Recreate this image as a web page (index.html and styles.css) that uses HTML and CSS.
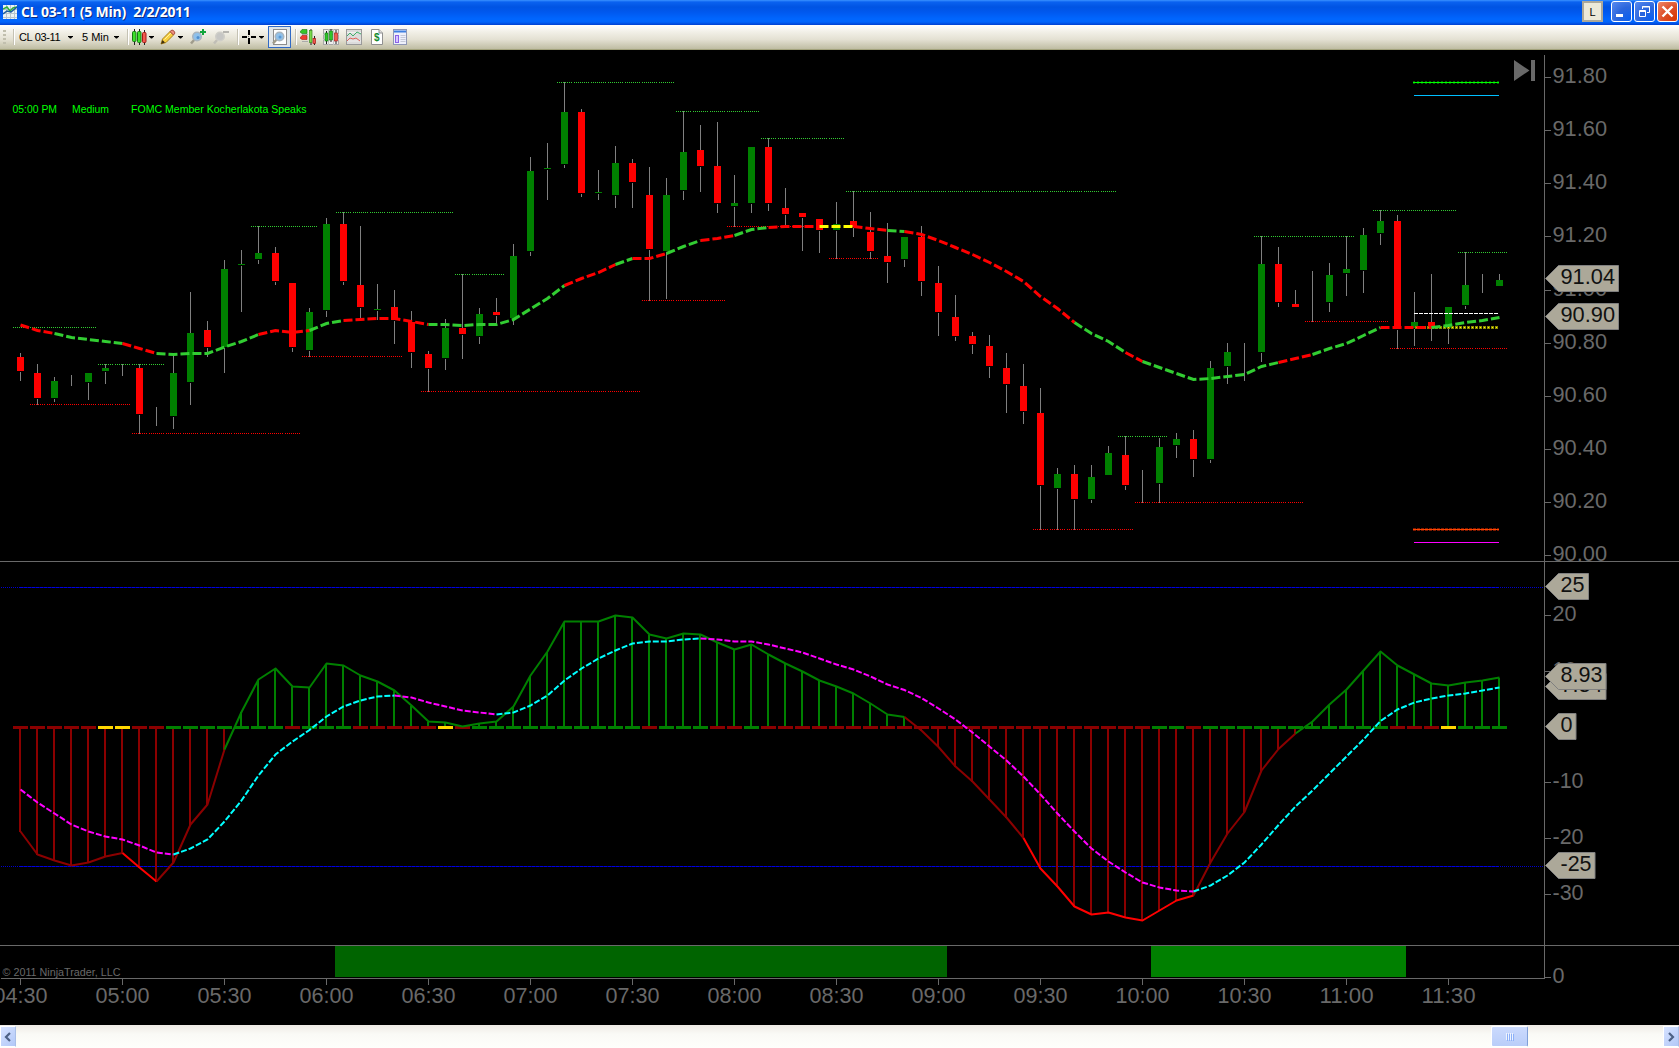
FILE: index.html
```
<!DOCTYPE html>
<html lang="en">
<head>
  <meta charset="UTF-8" />
  <meta name="viewport" content="width=device-width, initial-scale=1" />
  <title>CL 03-11 (5 Min)  2/2/2011</title>
  <link rel="stylesheet" href="styles.css">
</head>
<body>

  <header class="titlebar">
    <svg class="app-icon" width="14" height="14" viewBox="0 0 14 14">
      <rect width="14" height="14" fill="#e9f3f6" />
      <path d="M3.500 0v14M7.500 0v14M11.500 0v14M0 4.500h14M0 8.500h14M0 12.500h14" stroke="#b9c4cc" fill="none" />
      <path d="M0 4l4-2 3 4 3-3 4-1" stroke="#2fae3c" stroke-width="1.500" fill="none" />
      <path d="M0 9l4-3 4 1 6-5" stroke="#1d5e9c" stroke-width="1.500" fill="none" />
    </svg>
    <h1 class="title">CL 03-11 (5 Min)  2/2/2011</h1>
    <button class="link-btn">L</button>
    <div class="window-btns">
      <button class="win" aria-label="Minimize">
        <svg width="21" height="21" viewBox="0 0 21 21"><path d="M5 14.500h7" stroke="#fff" stroke-width="3" /></svg>
      </button>
      <button class="win" aria-label="Restore">
        <svg width="21" height="21" viewBox="0 0 21 21" fill="none" stroke="#fff">
          <path d="M8.500 8V5.500h7v6H13M8 6h8" /><path d="M5.500 9.500h6v6h-6zM5 10.500h7" />
        </svg>
      </button>
      <button class="win close" aria-label="Close">
        <svg width="21" height="21" viewBox="0 0 21 21"><path d="M5.500 5.500l10 10M15.500 5.500l-10 10" stroke="#fff" stroke-width="2.400" /></svg>
      </button>
    </div>
  </header>

  <nav class="toolbar">
    <span class="grip"><i></i><i></i><i></i><i></i></span>
    <span class="sep"></span>
    <span class="pick instrument">CL 03-11</span><i class="caret"></i>
    <span class="pick interval">5 Min</span><i class="caret"></i>
    <span class="sep"></span>

    <div class="tools">
      <svg class="icon" viewBox="0 0 16 16">
        <path d="M2.500 0v16M7.500 0v16M12.500 1v15" stroke="#222" />
        <rect x="0.500" y="2.500" width="3.500" height="10" rx="1" fill="#3ee02b" stroke="#157a12" />
        <rect x="5.500" y="2.500" width="3.500" height="11" rx="1" fill="#3ee02b" stroke="#157a12" />
        <rect x="10.500" y="3.500" width="3.500" height="10" rx="1" fill="#f25b50" stroke="#a31a14" />
      </svg><i class="caret tight"></i>
      <svg class="icon pencil" viewBox="0 0 16 16">
        <path d="M1 15l1.500-5L10 2.500 13.500 6 6 13.500z" fill="#f8d040" stroke="#a8801c" />
        <path d="M10 2.500L12 1q2 0 3 3l-1.500 2z" fill="#ef8f80" stroke="#a85040" />
        <path d="M1 15l1.500-4L5 13.500z" fill="#403010" />
        <path d="M4.500 10.500l6.500-6.500" stroke="#fff0a0" />
      </svg><i class="caret tight"></i>
      <svg class="icon zoom-in" viewBox="0 0 16 16">
        <path d="M4.500 10.500L1 14.500" stroke="#a09c8c" stroke-width="2.500" />
        <circle cx="7" cy="7.500" r="4.300" fill="#8fc0ea" stroke="#a9b4bd" stroke-width="1.500" />
        <circle cx="8" cy="8.500" r="1.500" fill="#4e8fd0" />
        <path d="M13 0v6M10 3h6" stroke="#12a53c" stroke-width="2" />
      </svg>
      <svg class="icon zoom-out" viewBox="0 0 16 16">
        <path d="M4.500 10.500L1 14.500" stroke="#c0beb6" stroke-width="2.500" />
        <circle cx="7" cy="7.500" r="4.300" fill="#c6c6c4" stroke="#cfcec8" stroke-width="1.500" />
        <path d="M10 3h6" stroke="#b6b5b0" stroke-width="2" />
      </svg>
    </div>
    <span class="sep"></span>

    <div class="tools">
      <svg class="icon" viewBox="0 0 16 16" shape-rendering="crispEdges">
        <path d="M7 1v5M7 9v6M0 8h5M9 8h5" stroke="#000" stroke-width="2" /><path d="M6 7h1v1H6z" fill="#777" />
      </svg><i class="caret tight"></i>
      <button class="tool-active" aria-label="Zoom frame">
        <svg class="icon" viewBox="0 0 16 16">
          <rect x="1.500" y="0.500" width="13" height="15" fill="#fff" stroke="#8d8d8d" />
          <path d="M5 10l-4 4.500" stroke="#a09c8c" stroke-width="2.500" />
          <circle cx="7.500" cy="7.500" r="4.300" fill="#8fc0ea" stroke="#a9b4bd" stroke-width="1.500" />
          <circle cx="8" cy="8" r="1.500" fill="#5a98d4" />
        </svg>
      </button>
    </div>
    <span class="sep"></span>

    <div class="tools windows">
      <svg class="icon" viewBox="0 0 16 16">
        <path d="M0 3l2-2.500h5v4H2z" fill="#35c52a" stroke="#157a12" stroke-width=".6" />
        <path d="M0 9l2-2.500h5v4H2z" fill="#f03a30" stroke="#a31a14" stroke-width=".6" />
        <path d="M2 5.500h6M2 12.500h6" stroke="#aaa" />
        <path d="M11 0v16M14.500 7v9" stroke="#222" />
        <rect x="9.500" y="1.500" width="2.500" height="12" fill="#7bd94a" stroke="#3b8d20" stroke-width=".7" />
        <rect x="13" y="9.500" width="2.500" height="5" fill="#f25b50" stroke="#a31a14" stroke-width=".7" />
      </svg>
      <svg class="icon" viewBox="0 0 16 16">
        <rect x="0.500" y="0.500" width="15" height="15" fill="#eee" stroke="#a7a7a7" />
        <path d="M0 5.500h16M0 10.500h16M5.500 0v16M10.500 0v16" stroke="#c4c4c4" />
        <path d="M3.500 2v13M8 0v13M13 1v14" stroke="#222" />
        <rect x="2" y="4" width="3" height="8" fill="#2fc42a" stroke="#157a12" stroke-width=".6" />
        <rect x="6.500" y="2" width="3" height="9" fill="#2fc42a" stroke="#157a12" stroke-width=".6" />
        <rect x="11.500" y="4" width="3" height="8" fill="#f25b50" stroke="#a31a14" stroke-width=".6" />
      </svg>
      <svg class="icon" viewBox="0 0 16 16">
        <rect x="0.500" y="0.500" width="15" height="15" fill="#dcdcdc" stroke="#9a9a9a" />
        <path d="M1 3.500h14M1 12h14" stroke="#efefef" />
        <path d="M1 7l3-3 3 3 4-4 4 2" stroke="#3fae6a" fill="none" />
        <path d="M1 12l3-3 3 1 3-1 4 3" stroke="#e0605a" fill="none" />
      </svg>
      <svg class="icon" viewBox="0 0 16 16">
        <path d="M2.500 .5H10L13.500 4v11.500h-11z" fill="#fff" stroke="#909090" />
        <path d="M10 .5V4h3.500" fill="#ddd" stroke="#909090" />
        <text class="dollar" x="5" y="12">$</text>
      </svg>
      <svg class="icon" viewBox="0 0 16 16">
        <rect x="1.500" y="0.500" width="13" height="15" fill="#eef0fb" stroke="#8f97b5" />
        <path d="M2 2.500h12" stroke="#3e7fe0" stroke-width="2" />
        <rect x="3.500" y="6.500" width="3" height="7" fill="#d9c8ff" stroke="#8a62e8" />
        <path d="M8.500 6.500h5M8.500 8.500h5M8.500 10.500h5M8.500 12.500h5" stroke="#c5c9d8" />
      </svg>
    </div>
  </nav>

  <svg id="chart" class="chart" width="1679" height="975" viewBox="0 50 1679 975"></svg>

  <footer class="scrollbar">
    <button class="scroll-btn left" aria-label="Scroll left">
      <svg width="8" height="10" viewBox="0 0 8 10"><path d="M6 1L2 5l4 4" fill="none" stroke="#4d6185" stroke-width="2.200" /></svg>
    </button>
    <div class="track"><div class="thumb"><i></i><i></i><i></i><i></i></div></div>
    <button class="scroll-btn right" aria-label="Scroll right">
      <svg width="8" height="10" viewBox="0 0 8 10"><path d="M2 1l4 4-4 4" fill="none" stroke="#4d6185" stroke-width="2.200" /></svg>
    </button>
  </footer>

  <script>
    const chart = document.getElementById('chart');
    const barX = i => 20 + 17 * i;
    const AXIS = 1544;

    // high, body top, body bottom, low, colour (n = no body)
    const candles = [
      [353,357,371,381,'r'], [364,373,398,405,'r'], [377,381,398,402,'g'], [375,0,0,386,'n'],
      [373,373,382,400,'g'], [364,368,371,384,'g'], [364,0,0,376,'n'], [364,368,414,434,'r'],
      [407,0,0,426,'n'], [355,373,416,429,'g'], [292,333,382,405,'g'], [321,330,347,357,'r'],
      [260,269,347,373,'g'], [250,264,265,312,'g'], [226,253,259,264,'g'], [247,253,281,285,'r'],
      [283,283,347,352,'r'], [308,312,350,357,'g'], [218,224,310,317,'g'], [212,224,281,285,'r'],
      [226,285,307,319,'r'], [284,309,310,320,'g'], [290,307,320,344,'r'], [311,322,352,368,'r'],
      [351,354,368,392,'r'], [319,328,358,370,'g'], [274,328,334,359,'r'], [308,314,336,344,'g'],
      [298,312,315,324,'r'], [244,256,318,325,'g'], [157,171,251,256,'g'], [143,168,169,200,'g'],
      [82,112,164,168,'g'], [109,112,193,197,'r'], [170,192,193,200,'g'], [146,163,195,208,'g'],
      [159,163,182,208,'r'], [167,195,249,301,'r'], [178,195,251,299,'g'], [111,152,190,200,'g'],
      [125,150,166,192,'r'], [122,166,203,213,'r'], [175,203,206,227,'g'], [147,147,203,213,'g'],
      [138,147,203,211,'r'], [188,208,214,226,'r'], [213,213,217,251,'r'], [219,219,230,253,'r'],
      [202,224,230,259,'g'], [191,221,227,237,'r'], [212,232,251,259,'r'], [223,256,262,283,'r'],
      [237,237,259,267,'g'], [226,237,281,296,'r'], [266,283,312,336,'r'], [295,317,336,341,'r'],
      [332,336,344,354,'r'], [335,346,366,378,'r'], [353,368,384,413,'r'], [364,386,411,424,'r'],
      [388,413,485,530,'r'], [468,474,488,530,'g'], [465,474,499,530,'r'], [465,477,499,503,'g'],
      [446,453,475,475,'g'], [436,455,485,490,'r'], [470,0,0,503,'n'], [438,447,483,503,'g'],
      [433,439,445,458,'g'], [430,439,459,477,'r'], [361,368,459,463,'g'], [343,352,366,384,'g'],
      [343,0,0,381,'n'], [236,264,352,362,'g'], [247,264,302,307,'r'], [290,304,307,307,'r'],
      [271,0,0,322,'n'], [263,275,302,312,'g'], [236,269,273,296,'g'], [228,235,270,293,'g'],
      [210,221,233,245,'g'], [215,221,329,349,'r'], [292,322,328,346,'g'], [274,322,328,341,'r'],
      [307,307,328,344,'g'], [252,285,305,309,'g'], [274,0,0,293,'n'], [274,280,286,286,'g']
    ];

    // swing levels: first bar, last bar, y, colour
    const levels = [
      [0,4,327,'g'], [5,8,364,'g'], [1,6,404,'r'], [7,16,433,'r'], [14,17,226,'g'], [17,22,356,'r'],
      [19,25,212,'g'], [24,36,391,'r'], [26,28,274,'g'], [32,38,82,'g'], [39,43,111,'g'], [44,48,138,'g'],
      [49,64,191,'g'], [42,46,226,'r'], [37,41,300,'r'], [48,50,258,'r'], [60,65,529,'r'], [65,67,436,'g'],
      [66,75,502,'r'], [73,78,236,'g'], [76,80,321,'r'], [80,84,210,'g'], [85,87,252,'g'], [81,87,348,'r']
    ];

    const average = [
      325,330.5,333.5,337.5,339.5,341.5,343.5,348.5,353.5,354.5,353.5,353.5,347,341.5,334.5,330.5,332.5,330.5,
      323.5,320.5,319.5,318.5,318.5,321.5,324.5,324.5,325.5,324.5,324.5,319.5,309,298.5,285.5,278.5,272.5,264.5,
      258.5,258.5,253.5,246.5,240.5,238.5,235.5,229.5,227.5,226.5,226.5,226.5,226.5,226.5,228.5,230.5,231.5,234.5,
      240.5,247.5,254.5,262.5,271.5,281.5,296.5,308.5,322.5,333.5,341.5,352.5,361.5,367.5,373.5,379.5,378.5,376.5,
      374.5,366.5,362.5,358.5,354.5,348.5,343.5,335.5,327.5,327.5,327.5,327.5,325.5,322.5,320.5,317.5
    ];
    // [last bar of the run, colour]
    const averageRuns = [
      [2,'red'], [6,'limegreen'], [8,'red'], [14,'limegreen'], [17,'red'], [19,'limegreen'], [24,'red'],
      [32,'limegreen'], [35,'red'], [36,'limegreen'], [38,'red'], [40,'limegreen'], [42,'red'], [44,'limegreen'],
      [47,'red'], [49,'yellow'], [51,'red'], [52,'limegreen'], [62,'red'], [65,'limegreen'], [66,'red'],
      [74,'limegreen'], [76,'red'], [80,'limegreen'], [83,'red'], [87,'limegreen']
    ];

    const osc = [
      831.5,854.5,860.5,865.5,862.5,856.5,853,867.5,881.5,862.5,824.5,804.5,749.5,712,679.5,668.5,686.5,687.5,
      663.5,665.5,675.5,681.5,690.5,705.5,721.5,722.5,726.5,723.5,721.5,706.5,675.5,651.5,621.5,621.5,621.5,615.5,
      617.5,634.5,638.5,633.5,634.5,642.5,649.5,644.5,654.5,663.5,671.5,680.5,686.5,693.5,703.5,714.5,717,730.5,
      747,766.5,781.5,799.5,817.5,838,868.5,886.5,906.5,914.5,912.5,917.5,920.5,910.5,900.5,895.5,862.5,833.5,
      812,770.5,749,733.5,721.5,704.5,689.5,670.5,651.5,665.5,674.5,683.5,685.5,682.5,680.5,677.5
    ];
    const oscRuns = [[6,'#8b0000'], [8,'red'], [12,'#8b0000'], [52,'green'], [59,'#8b0000'], [69,'red'], [75,'#8b0000'], [87,'green']];

    const signal = [
      789.5,802.5,813.5,824.5,831.5,836.5,839.5,845.5,852.5,854.5,848.5,839.5,821.5,800.5,775.5,754.5,741.5,730,
      716.5,706.5,700.5,696.5,695.5,697.5,702.5,706.5,710.5,712.5,714.5,712.5,705.5,695.5,680.5,668.5,658.5,650.5,
      643.5,641.5,641.5,639.5,638.5,639.5,641.5,641.5,644.5,648.5,652.5,658.5,664.5,669.5,676.5,684.5,690,698,
      708.5,719.5,732.5,746.5,760.5,776.5,794.5,813.5,831.5,848.5,861.5,872.5,882.5,887.5,890.5,891.5,885.5,875.5,
      862.5,844.5,825,806.5,790.5,773.5,756.5,739.5,721,709.5,702.5,698.5,695.5,693.5,690.5,687.5
    ];
    const signalRuns = [[9,'magenta'], [22,'cyan'], [28,'magenta'], [40,'cyan'], [69,'magenta'], [87,'cyan']];

    // one letter per bar on the zero line
    const zero = 'rrrrryyrrgggggggrgggrrrrryrggggggggggrgggrrg' + 'r'.repeat(23) + 'ggrgggggggggggrrryggg';

    let out = '';
    const rect = (x, y, w, h, fill) => { out += `<rect class="px" x="${x}" y="${y}" width="${w}" height="${h}" fill="${fill}"/>`; };
    const hline = (x1, x2, y, stroke, dash = '', w = 1, cls = 'px') => {
      out += `<path class="${cls}" d="M${x1} ${y + 0.5}H${x2}" stroke="${stroke}" stroke-width="${w}" stroke-dasharray="${dash}"/>`;
    };
    const text = (x, y, s, cls, len) => {
      out += `<text class="${cls}" x="${x}" y="${y}" textLength="${len}" lengthAdjust="spacingAndGlyphs">${s}</text>`;
    };
    function runs(ys, list, cls) {
      let from = 0;
      list.forEach(([to, colour]) => {
        let pts = '';
        for (let i = from; i <= to; i++) pts += `${barX(i) + 0.5},${ys[i]} `;
        out += `<polyline class="${cls}" points="${pts}" stroke="${colour}"/>`;
        from = to;
      });
    }

    // price scale
    [77, 130, 183, 236, 290, 343, 396, 449, 502, 555].forEach((y, k) => {
      rect(AXIS + 1, y, 6, 1, '#696969');
      text(1552.5, y + 6, (91.8 - k * 0.2).toFixed(2), 'scale', 54.5);
    });
    [[20, 615, 24], [10, 671, 24], [-10, 782, 31], [-20, 838, 31], [-30, 894, 31], [0, 977, 12]].forEach(([v, y, len]) => {
      rect(AXIS + 1, y, 6, 1, '#696969');
      text(1552.5, y + 6, v, 'scale', len);
    });

    // price panel
    candles.forEach(([hi, top, bottom, lo, c], i) => {
      const x = barX(i);
      if (c === 'n') return rect(x, hi, 1, lo - hi, 'gray');
      rect(x, hi, 1, top - hi, 'gray');
      if (lo > bottom) rect(x, bottom + 1, 1, lo - bottom - 1, 'gray');
      rect(x - 3, top, 7, bottom - top, c === 'r' ? 'red' : 'green');
    });
    levels.forEach(([a, b, y, c]) => {
      for (let i = a; i <= b; i++) hline(barX(i) - 7, barX(i) + 8, y, c === 'r' ? 'red' : 'limegreen', '1 1');
    });
    hline(1413, 1499, 82, '#006400', '2 2', 3);
    hline(1413, 1499, 82, 'lime');
    hline(1414, 1499, 95, 'deepskyblue');
    hline(1414, 1499, 313, 'white', '4 1');
    hline(1415, 1499, 327, '#8a8a00', '3 1', 3, '');
    hline(1416, 1499, 327, 'yellow', '1 3');
    hline(1413, 1499, 529, '#7a1800', '3 1', 3, '');
    hline(1413, 1499, 529, 'orangered');
    hline(1414, 1499, 542, 'magenta');
    runs(average, averageRuns, 'average');
    out += '<path class="to-end" d="M1514 60l15.500 10.500L1514 81z"/>';
    rect(1531, 60, 4, 21, '#696969');

    // oscillator panel
    [587, 866].forEach(y => {
      hline(1, 20, y, '#0000cd', '1 1');
      hline(20, 1499, y, '#00008b');
      hline(20, 1499, y, '#0000e0', '3 1');
      hline(1500, AXIS, y, '#0000cd', '1 1');
    });
    osc.forEach((y, i) => {
      if (Math.abs(y - 727.5) < 3) return;
      y < 727 ? rect(barX(i) - 1, y, 2, 726 - y, 'green') : rect(barX(i) - 1, 729, 2, y - 729, '#8b0000');
    });
    [...zero].forEach((c, i) => rect(barX(i) - 7, 726, 15, 3, { r: '#8b0000', g: 'green', y: 'gold' }[c]));
    runs(osc, oscRuns, 'osc');
    runs(signal, signalRuns, 'signal');

    // session strip
    rect(335, 946, 612, 31, '#006400');
    rect(1151, 946, 255, 31, '#008000');

    // frame and time scale
    rect(0, 561, 1679, 1, '#696969');
    rect(0, 945, 1679, 1, '#696969');
    rect(1, 978, AXIS, 1, '#696969');
    rect(AXIS, 55, 1, 924, '#696969');
    for (let k = 0; k < 15; k++) {
      const x = 20 + 102 * k, m = 270 + 30 * k;
      rect(x, 979, 1, 6, '#696969');
      text(x + 0.5, 1003, String(Math.floor(m / 60)).padStart(2, '0') + ':' + (m % 60 ? '30' : '00'), 'scale mid', 54);
    }

    // price markers
    [[278, 1619, '91.04', 54.5], [316, 1619, '90.90', 54.5], [586, 1589, '25', 24], [686, 1606.5, '7.34', 42],
     [676, 1606.5, '8.93', 42], [726, 1576.5, '0', 12], [865, 1595.5, '-25', 31]].forEach(([y, right, s, len]) => {
      out += `<path class="marker" d="M1545.500 ${y + .5}L1558.500 ${y - 12.5}H${right - .5}V${y + 13.5}H1558.500z"/>`;
      text(1560.5, y + 6, s, 'marker-text', len);
    });

    text(12.5, 113, '05:00 PM', 'news', 44.5);
    text(72, 113, 'Medium', 'news', 37);
    text(131, 113, 'FOMC Member Kocherlakota Speaks', 'news', 175.5);
    text(2.5, 976, '© 2011 NinjaTrader, LLC', 'copyright', 118);

    chart.innerHTML = out;
  </script>

</body>
</html>
```

FILE: styles.css
```
* {
  box-sizing: border-box;
}
body {
  margin: 0;
  width: 1679px;
  height: 1048px;
  overflow: hidden;
  display: flex;
  flex-direction: column;
  background: #000;
  font-family: "Liberation Sans", Arial, sans-serif;
}
button {
  padding: 0;
  border: none;
  font: inherit;
}

/* title bar */
.titlebar {
  display: flex;
  align-items: center;
  height: 25px;
  padding: 0 1px 2px 3px;
  background: linear-gradient(#3a92ff 0, #0a62f0 2px, #0054e3 7px, #0058ee 12px, #0066ff 19px, #0064fb 22px, #003fd0 25px);
}
.app-icon {
  flex: none;
}
.title {
  flex: 1;
  margin: 0 0 0 4px;
  white-space: pre;
  font: bold 14px "Open Sans", "Noto Sans", sans-serif;
  letter-spacing: -0.3px;
  word-spacing: 0.4px;
  color: #fff;
  text-shadow: 1px 1px #0a2a80;
}
.link-btn {
  width: 21px;
  height: 21px;
  margin-right: 8px;
  background: #ece9d8;
  border: 2px solid #aca899;
  font-size: 11px;
  color: #000;
}
.window-btns {
  display: flex;
  gap: 2px;
}
.win {
  width: 21px;
  height: 21px;
  border: 1px solid #fff;
  border-radius: 3px;
  background: radial-gradient(circle at 90% 90%, #0a60f0, #2c66dc 50%, #5a8bf0);
}
.win svg {
  display: block;
  margin: -1px;
}
.win.close {
  background: radial-gradient(circle at 90% 90%, #d83a08, #dc4e28 50%, #f08a6a);
}

/* toolbar */
.toolbar {
  display: flex;
  align-items: center;
  height: 25px;
  padding-left: 3px;
  background: linear-gradient(#fff, #f1efe6 30%, #e4e1d3 60%, #bfbda3);
  border-bottom: 1px solid #a3a37c;
}
.grip {
  display: flex;
  flex-direction: column;
  gap: 2px;
  margin-right: 7px;
}
.grip i {
  width: 3px;
  height: 2px;
  background: #c1bfae;
}
.sep {
  width: 2px;
  height: 16px;
  background: #c5c2b4;
  border-right: 1px solid #fff;
}
.pick {
  font-size: 11px;
  white-space: nowrap;
  color: #000;
}
.instrument {
  width: 43px;
  margin: 0 6px 0 4px;
  letter-spacing: -0.35px;
}
.interval {
  width: 26px;
  margin: 0 6px 0 9px;
}
.caret {
  width: 5px;
  height: 3px;
  background: #000;
  clip-path: polygon(0 0, 100% 0, 100% 1px, 60% 100%, 40% 100%, 0 1px);
}
.caret + .sep {
  margin-left: 8px;
}
.tools {
  display: flex;
  align-items: center;
  margin-left: 3px;
}
.tools + .sep {
  margin-left: 8px;
}
.icon {
  flex: none;
  width: 16px;
  height: 16px;
}
.caret.tight {
  margin-left: 1px;
}
.pencil {
  margin-left: 6px;
}
.pencil + .caret {
  margin-left: 2px;
}
.zoom-in,
.zoom-out {
  margin-left: 7px;
}
.tool-active {
  display: flex;
  align-items: center;
  justify-content: center;
  width: 23px;
  height: 22px;
  margin: 0 -4px 0 4px;
  background: #e1e6e8;
  border: 1px solid #316ac5;
}
.windows {
  gap: 7px;
}
.dollar {
  font: bold 10px "Liberation Sans", sans-serif;
  fill: #128a2e;
}

/* chart */
.chart {
  display: block;
  flex: none;
}
.chart path,
.chart polyline {
  fill: none;
}
.chart .to-end {
  fill: #696969;
}
.px {
  shape-rendering: crispEdges;
}
.average {
  stroke-width: 3;
  stroke-dasharray: 9 3;
}
.osc {
  stroke-width: 2;
  stroke-linejoin: round;
}
.signal {
  stroke-width: 2;
  stroke-dasharray: 6 2;
}
.scale,
.marker-text {
  font-size: 21.33px;
  fill: #696969;
}
.scale.mid {
  text-anchor: middle;
}
.chart .marker {
  fill: #aca899;
  stroke: #808080;
}
.marker-text {
  fill: #111;
}
.news,
.copyright {
  font-size: 11px;
  fill: lime;
}
.copyright {
  fill: #696969;
}

/* scrollbar */
.scrollbar {
  display: flex;
  align-items: center;
  height: 23px;
  background: linear-gradient(#efebe6, #fafaf6 40%, #fefefb);
}
.scroll-btn {
  display: flex;
  align-items: center;
  justify-content: center;
  width: 16px;
  height: 21px;
  border: 1px solid #fff;
  border-right-color: #a9bfe8;
  background: linear-gradient(135deg, #d6e2ff, #b2c8f8);
}
.track {
  flex: 1;
  display: flex;
  justify-content: flex-end;
}
.thumb {
  display: flex;
  align-items: center;
  justify-content: center;
  gap: 1px;
  width: 37px;
  height: 21px;
  margin-right: 135px;
  border: 1px solid #fff;
  border-right: 1px solid #7f9fd8;
  border-radius: 2px;
  background: linear-gradient(#cbdafd, #b9cdf9);
}
.thumb i {
  width: 1px;
  height: 7px;
  background: #eef4fe;
  box-shadow: 1px 1px #8cb0f8;
}
```
